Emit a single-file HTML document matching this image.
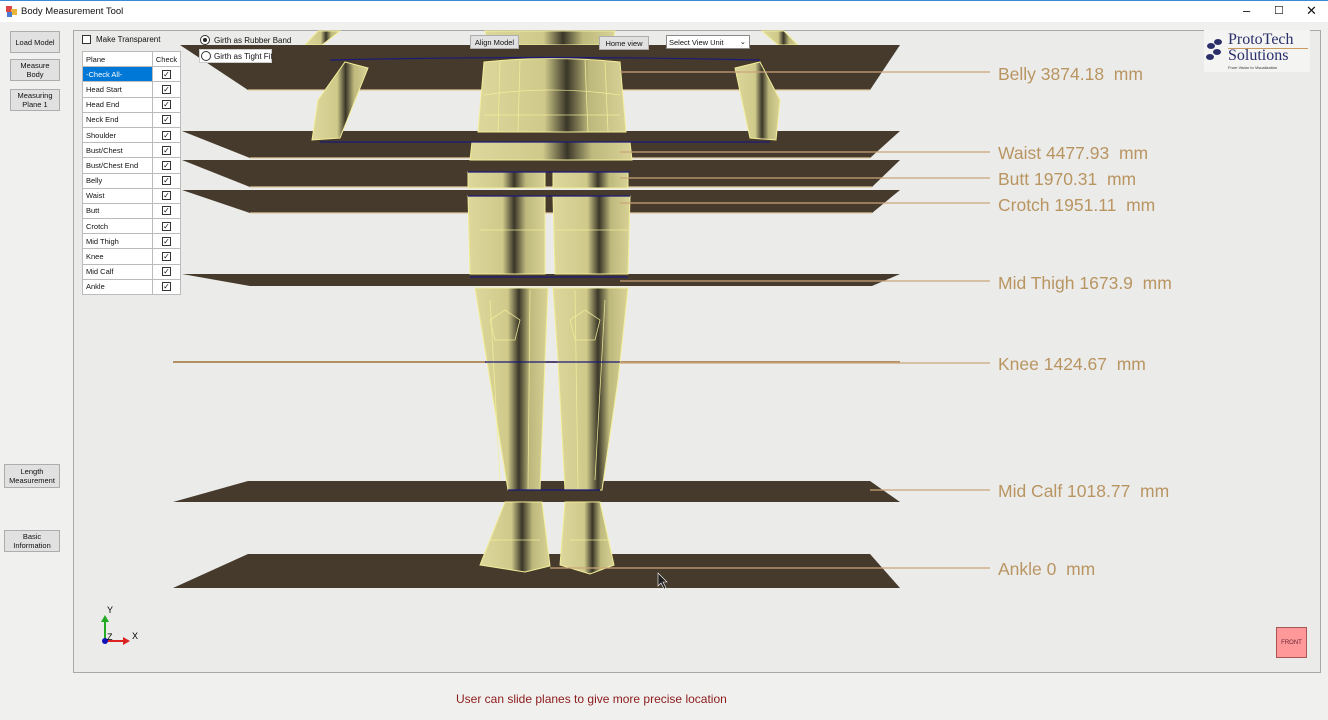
<!DOCTYPE html>
<html><head><meta charset="utf-8"><style>
*{margin:0;padding:0;box-sizing:border-box}
body{width:1328px;height:720px;background:#f0f0ee;font-family:"Liberation Sans",sans-serif;position:relative;overflow:hidden;font-size:8px;color:#111}
.title{position:absolute;left:0;top:0;width:1328px;height:22px;background:#fff;border-top:1px solid #3a8ad6}
.title span{position:absolute;left:21px;top:5px;font-size:9.5px}
.btn{position:absolute;background:#e1e1e1;border:1px solid #adadad;text-align:center;font-size:7.5px;line-height:9px;display:flex;align-items:center;justify-content:center}
.vp{position:absolute;left:73px;top:30px;width:1248px;height:643px;background:#ebebe9;border:1px solid #a8a8a8;overflow:hidden}
table{border-collapse:collapse;position:absolute;left:82px;top:51px;background:#fff;border:1px solid #222;font-size:7.5px}
td{height:15.2px;border:1px solid #bbb;padding-left:3px}
td.c{width:28px;text-align:center;padding:0}
.cb{display:inline-block;width:9px;height:9px;border:1px solid #333;font-size:8px;line-height:7px}
.lab{position:absolute;left:998px;font-size:17.5px;color:#b99562;font-family:"Liberation Sans",sans-serif;white-space:nowrap}
</style></head><body>
<div class="title"><svg style="position:absolute;left:6px;top:5px" width="11" height="11"><rect x="0" y="0" width="6" height="6" fill="#d44"/><rect x="5" y="3" width="6" height="6" fill="#e9b53a"/><rect x="1" y="6" width="5" height="5" fill="#4a7bd0"/></svg><span>Body Measurement Tool</span>
<span style="left:1243px;top:2px;font-size:13px">–</span><span style="left:1274px;top:3px;font-size:11px">☐</span><span style="left:1306px;top:2px;font-size:13px">✕</span></div>
<div class="btn" style="left:10px;top:31px;width:50px;height:22px">Load Model</div>
<div class="btn" style="left:10px;top:59px;width:50px;height:22px">Measure<br>Body</div>
<div class="btn" style="left:10px;top:89px;width:50px;height:22px">Measuring<br>Plane 1</div>
<div class="btn" style="left:4px;top:464px;width:56px;height:24px">Length<br>Measurement</div>
<div class="btn" style="left:4px;top:530px;width:56px;height:22px">Basic<br>Information</div>
<div class="vp"></div>
<svg style="position:absolute;left:0;top:0" width="1328" height="720">
<defs><linearGradient id="lg" x1="0" x2="1"><stop offset="0" stop-color="#ddd79c"/><stop offset=".45" stop-color="#cfc98a"/><stop offset=".6" stop-color="#3a3628"/><stop offset=".75" stop-color="#bdb87c"/><stop offset="1" stop-color="#d8d296"/></linearGradient></defs>
<g fill="url(#lg)" stroke="#f3ee9a" stroke-width="1">
<path d="M485,31 L615,31 L612,45 L488,45 Z"/>
<path d="M318,31 L340,31 L322,45 L305,45 Z"/><path d="M762,31 L784,31 L798,45 L778,45 Z"/>
</g>
<g fill="#453a2c">
<polygon points="180,45 900,45 870,90 248,90"/>
<polygon points="182,131 900,131 870,158 250,158"/>
<polygon points="182,160 900,160 872,187 250,187"/>
<polygon points="182,190 900,190 872,213 250,213"/>
<polygon points="182,274 900,274 872,286 250,286"/>
<polygon points="248,481 870,481 900,502 173,502"/>
<polygon points="248,554 870,554 900,588 173,588"/>
</g>
<line x1="173" y1="362" x2="900" y2="362" stroke="#b58f64" stroke-width="2"/>
<g stroke="#e0c9a0" stroke-width="1.3">
<line x1="248" y1="90" x2="870" y2="90"/><line x1="250" y1="158" x2="870" y2="158"/><line x1="250" y1="187" x2="872" y2="187"/><line x1="250" y1="213" x2="872" y2="213"/>
</g>
<g fill="url(#lg)" stroke="#f3ee9a" stroke-width="1">
<path d="M484,62 Q550,55 620,62 L626,132 L478,132 Z"/>
<path d="M472,142 L630,142 L632,160 L470,160 Z"/>
<path d="M468,172 L545,172 L545,188 L468,188 Z"/><path d="M553,172 L628,172 L628,188 L553,188 Z"/>
<path d="M468,196 L545,196 L545,274 L470,274 Z"/><path d="M553,196 L630,196 L628,274 L555,274 Z"/>
<path d="M475,288 L548,288 L545,360 L540,490 L508,490 L490,380 Z"/><path d="M553,288 L628,288 L618,380 L602,490 L565,490 L558,360 Z"/>
<path d="M505,502 L542,502 L550,566 L525,572 L480,565 Z"/><path d="M565,502 L600,502 L614,565 L590,574 L560,565 Z"/>
<path d="M345,62 L368,68 L340,138 L312,140 L318,100 Z"/><path d="M735,68 L760,62 L780,100 L776,140 L750,138 Z"/>
</g>
<g stroke="#f3ee9a" stroke-width=".8" fill="none" opacity=".9">
<path d="M500,62 L498,132 M520,60 L518,132 M585,60 L588,132 M605,62 L608,132 M484,95 Q550,85 620,95 M484,115 L620,115"/>
<path d="M490,300 L500,480 M530,290 L528,490 M575,290 L578,490 M605,300 L595,480 M480,230 L545,230 M555,230 L628,230"/>
<path d="M490,320 l15,-10 l15,10 l-5,20 l-20,0 z M570,320 l15,-10 l15,10 l-5,20 l-20,0 z"/>
<path d="M490,540 l50,0 M570,540 l40,0"/>
</g>
<g stroke="#1a1a7a" stroke-width="1.2" fill="none">
<path d="M330,60 Q550,55 760,60"/><path d="M320,142 L770,142"/><path d="M468,172 L630,172"/><path d="M468,196 L630,196"/><path d="M470,277 L628,277"/><path d="M485,362 L620,362"/><path d="M508,490 L600,490"/>
</g>
<g stroke="#c9a57a" stroke-width="1.3">
<line x1="620" y1="72" x2="990" y2="72"/><line x1="620" y1="152" x2="990" y2="152"/><line x1="620" y1="178" x2="990" y2="178"/><line x1="620" y1="203" x2="990" y2="203"/><line x1="620" y1="281" x2="990" y2="281"/><line x1="620" y1="363" x2="990" y2="363"/><line x1="870" y1="490" x2="990" y2="490"/><line x1="550" y1="568" x2="990" y2="568"/>
</g>
<line x1="105" y1="640" x2="105" y2="620" stroke="#2a2" stroke-width="2"/><polygon points="101,622 109,622 105,615" fill="#2a2"/>
<line x1="105" y1="641" x2="125" y2="641" stroke="#d22" stroke-width="2"/><polygon points="123,637 123,645 130,641" fill="#d22"/>
<circle cx="105" cy="641" r="3" fill="#11b"/>
<text x="107" y="613" font-size="9" font-family="Liberation Sans">Y</text><text x="107" y="640" font-size="9" font-family="Liberation Sans">Z</text><text x="132" y="639" font-size="9" font-family="Liberation Sans">X</text>
<path d="M658,573 L658,586 L661,583 L664,589 L666,588 L663,582 L667,582 Z" fill="#222" stroke="#fff" stroke-width=".6"/>
</svg>
<div style="position:absolute;left:82px;top:35px;width:9px;height:9px;border:1px solid #333;background:#fff"></div>
<div style="position:absolute;left:96px;top:35px;font-size:8px">Make Transparent</div>
<div style="position:absolute;left:200px;top:35px;width:10px;height:10px;border:1px solid #333;border-radius:50%;background:#fff"><div style="margin:2px;width:4px;height:4px;border-radius:50%;background:#222"></div></div>
<div style="position:absolute;left:214px;top:36px;font-size:8px">Girth as Rubber Band</div>
<div style="position:absolute;left:199px;top:49px;width:73px;height:14px;background:#fff;border:1px solid #ccc"></div>
<div style="position:absolute;left:201px;top:51px;width:10px;height:10px;border:1px solid #333;border-radius:50%;background:#fff"></div>
<div style="position:absolute;left:214px;top:52px;font-size:8px">Girth as Tight Fit</div>
<div class="btn" style="left:470px;top:35px;width:49px;height:14px">Align Model</div>
<div class="btn" style="left:599px;top:36px;width:50px;height:14px">Home view</div>
<div style="position:absolute;left:666px;top:35px;width:84px;height:14px;background:#fff;border:1px solid #888;font-size:7.5px;padding:2px 2px">Select View Unit<span style="position:absolute;right:3px;top:1px">⌄</span></div>
<table>
<tr><td style="width:70px">Plane</td><td class="c">Check</td></tr>
<tr><td style="background:#0078d7;color:#fff">-Check All-</td><td class="c"><span class="cb">✓</span></td></tr>
<tr><td>Head Start</td><td class="c"><span class="cb">✓</span></td></tr>
<tr><td>Head End</td><td class="c"><span class="cb">✓</span></td></tr>
<tr><td>Neck End</td><td class="c"><span class="cb">✓</span></td></tr>
<tr><td>Shoulder</td><td class="c"><span class="cb">✓</span></td></tr>
<tr><td>Bust/Chest</td><td class="c"><span class="cb">✓</span></td></tr>
<tr><td>Bust/Chest End</td><td class="c"><span class="cb">✓</span></td></tr>
<tr><td>Belly</td><td class="c"><span class="cb">✓</span></td></tr>
<tr><td>Waist</td><td class="c"><span class="cb">✓</span></td></tr>
<tr><td>Butt</td><td class="c"><span class="cb">✓</span></td></tr>
<tr><td>Crotch</td><td class="c"><span class="cb">✓</span></td></tr>
<tr><td>Mid Thigh</td><td class="c"><span class="cb">✓</span></td></tr>
<tr><td>Knee</td><td class="c"><span class="cb">✓</span></td></tr>
<tr><td>Mid Calf</td><td class="c"><span class="cb">✓</span></td></tr>
<tr><td>Ankle</td><td class="c"><span class="cb">✓</span></td></tr>
</table>
<div style="position:absolute;left:1204px;top:30px;width:106px;height:42px;background:#f4f4f2"></div>
<svg style="position:absolute;left:1205px;top:36px" width="20" height="30"><ellipse cx="13" cy="6" rx="4" ry="3" fill="#2a2f6a"/><ellipse cx="6" cy="10" rx="4" ry="3" fill="#2a2f6a"/><ellipse cx="12" cy="16" rx="4" ry="3" fill="#2a2f6a"/><ellipse cx="5" cy="21" rx="4" ry="3" fill="#2a2f6a"/></svg>
<div style="position:absolute;left:1228px;top:31px;font-family:'Liberation Serif',serif;font-size:16px;color:#2a2f6a">ProtoTech</div>
<div style="position:absolute;left:1228px;top:48px;width:80px;height:1px;background:#c89a60"></div>
<div style="position:absolute;left:1228px;top:47px;font-family:'Liberation Serif',serif;font-size:16px;color:#2a2f6a">Solutions</div>
<div style="position:absolute;left:1228px;top:65px;font-size:4px;color:#333">From Vision to Visualization</div>
<div class="lab" style="top:64px">Belly 3874.18&nbsp; mm</div>
<div class="lab" style="top:143px">Waist 4477.93&nbsp; mm</div>
<div class="lab" style="top:169px">Butt 1970.31&nbsp; mm</div>
<div class="lab" style="top:195px">Crotch 1951.11&nbsp; mm</div>
<div class="lab" style="top:273px">Mid Thigh 1673.9&nbsp; mm</div>
<div class="lab" style="top:354px">Knee 1424.67&nbsp; mm</div>
<div class="lab" style="top:481px">Mid Calf 1018.77&nbsp; mm</div>
<div class="lab" style="top:559px">Ankle 0&nbsp; mm</div>
<div style="position:absolute;left:1276px;top:627px;width:31px;height:31px;background:#f99;border:1px solid #a55;color:#623;font-size:6px;text-align:center;line-height:31px">FRONT</div>
<div style="position:absolute;left:456px;top:692px;font-size:12px;color:#8b1c1c">User can slide planes to give more precise location</div>
</body></html>
